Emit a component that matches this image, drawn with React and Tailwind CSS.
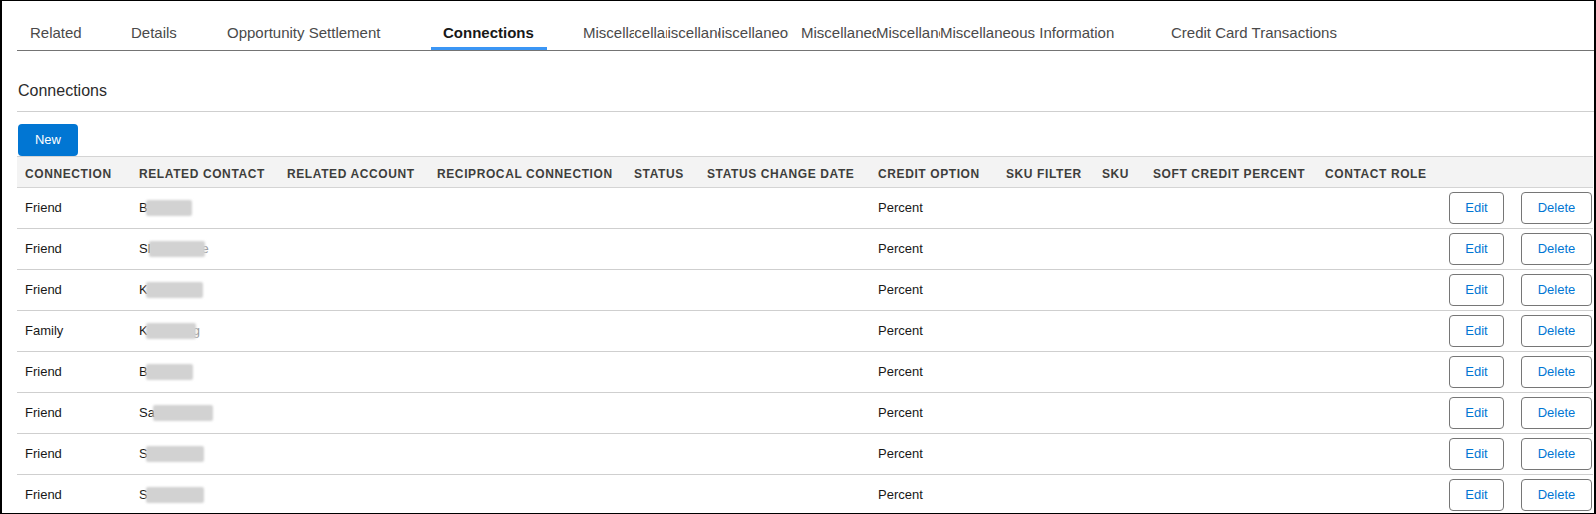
const cols =
  "grid grid-cols-[114px_148px_150px_197px_73px_171px_128px_96px_51px_172px_124px_72px_80px]";

const headers = [
  "Connection",
  "Related Contact",
  "Related Account",
  "Reciprocal Connection",
  "Status",
  "Status Change Date",
  "Credit Option",
  "SKU Filter",
  "SKU",
  "Soft Credit Percent",
  "Contact Role",
  "",
  "",
];

const rows = [
  { type: "Friend", first: "B", blur: 46, tail: "" },
  { type: "Friend", first: "Sl", blur: 56, tail: "e" },
  { type: "Friend", first: "K", blur: 57, tail: "" },
  { type: "Family", first: "K", blur: 50, tail: "g" },
  { type: "Friend", first: "B", blur: 47, tail: "" },
  { type: "Friend", first: "Sa", blur: 60, tail: "" },
  { type: "Friend", first: "S", blur: 58, tail: "" },
  { type: "Friend", first: "S", blur: 58, tail: "" },
];

const Tab = ({ w, active, children }) => (
  <div
    className={`relative flex items-end h-full px-3 pb-[7px] leading-[20px] whitespace-nowrap ${w} ${
      active ? "font-bold text-[#181818]" : ""
    }`}
  >
    {children}
    {active && <span className="absolute left-0 right-0 bottom-0 h-[3px] bg-[#3b96f5]" />}
  </div>
);

// tabs with squeezed labels, shown as slices of the same text
const Slice = ({ w, off }) => (
  <div className={`overflow-hidden ${w}`}>
    <span className={`block whitespace-nowrap ${off}`}>Miscellaneous Information</span>
  </div>
);

export default function App() {
  return (
    <div className="w-[1596px] h-[514px] overflow-hidden bg-white border-black border-l-2 border-r-2 border-t border-b pl-[15px] font-['Liberation_Sans',Arial,sans-serif]">
      <nav className="flex h-[50px] border-b border-[#747474] pl-px gap-6 text-[15px] text-[#4a4a4a]">
        <Tab w="w-[77px]">Related</Tab>
        <Tab w="w-[72px]">Details</Tab>
        <Tab w="w-[192px]">Opportunity Settlement</Tab>
        <Tab w="w-[116px]" active>
          Connections
        </Tab>
        <div className="flex items-end h-full px-3 pb-[7px] leading-[20px]">
          <Slice w="w-[51px]" off="ml-0" />
          <Slice w="w-[33px]" off="-ml-[23px]" />
          <Slice w="w-[52px]" off="-ml-[12px]" />
          <Slice w="w-[70px]" off="-ml-[10px]" />
          <div className="w-[12px]" />
          <Slice w="w-[75px]" off="ml-0" />
          <Slice w="w-[64px]" off="ml-0" />
          <Slice w="w-[183px]" off="ml-0" />
        </div>
        <Tab w="w-auto">Credit Card Transactions</Tab>
      </nav>

      <div className="h-[61px] border-b border-[#cfcfcf] flex items-end pb-[9px] pl-px text-[16px] leading-[22px] text-[#2b2b2b]">
        Connections
      </div>

      <div className="flex mt-3 pl-px">
        <button className="h-[32px] w-[60px] rounded-[4px] bg-[#0176d3] text-white text-[13px]">
          New
        </button>
      </div>

      <div className="w-[1576px]">
        <div className={`${cols} h-[32px] items-center border-t border-b border-[#d4d4d4] bg-[#f3f3f3]`}>
          {headers.map((h, i) => (
            <div
              key={i}
              className="pl-2 pt-[3px] whitespace-nowrap text-[12px] font-bold uppercase tracking-[0.6px] text-[#3e3e3c]"
            >
              {h}
            </div>
          ))}
        </div>

        {rows.map((r, i) => (
          <div
            key={i}
            className={`${cols} h-[41px] items-center border-b border-[#cfcfcf] text-[13px] text-[#181818]`}
          >
            <div className="pl-2">{r.type}</div>
            <div className="pl-2 flex items-center">
              <span>{r.first}</span>
              <span
                className="inline-block h-[16px] -ml-[2px] rounded-[2px] bg-[#d2d2d2] blur-[1px]"
                style={{ width: r.blur }}
              />
              {r.tail && <span className="-ml-[3px] text-[#9a9a9a]">{r.tail}</span>}
            </div>
            <div />
            <div />
            <div />
            <div />
            <div className="pl-2">Percent</div>
            <div />
            <div />
            <div />
            <div />
            <div className="pl-2 flex">
              <button className="h-[32px] w-[55px] rounded-[4px] border border-[#767676] bg-white text-[13px] text-[#0176d3]">
                Edit
              </button>
            </div>
            <div className="pl-2 flex">
              <button className="h-[32px] w-[71px] rounded-[4px] border border-[#767676] bg-white text-[13px] text-[#0176d3]">
                Delete
              </button>
            </div>
          </div>
        ))}
      </div>
    </div>
  );
}
